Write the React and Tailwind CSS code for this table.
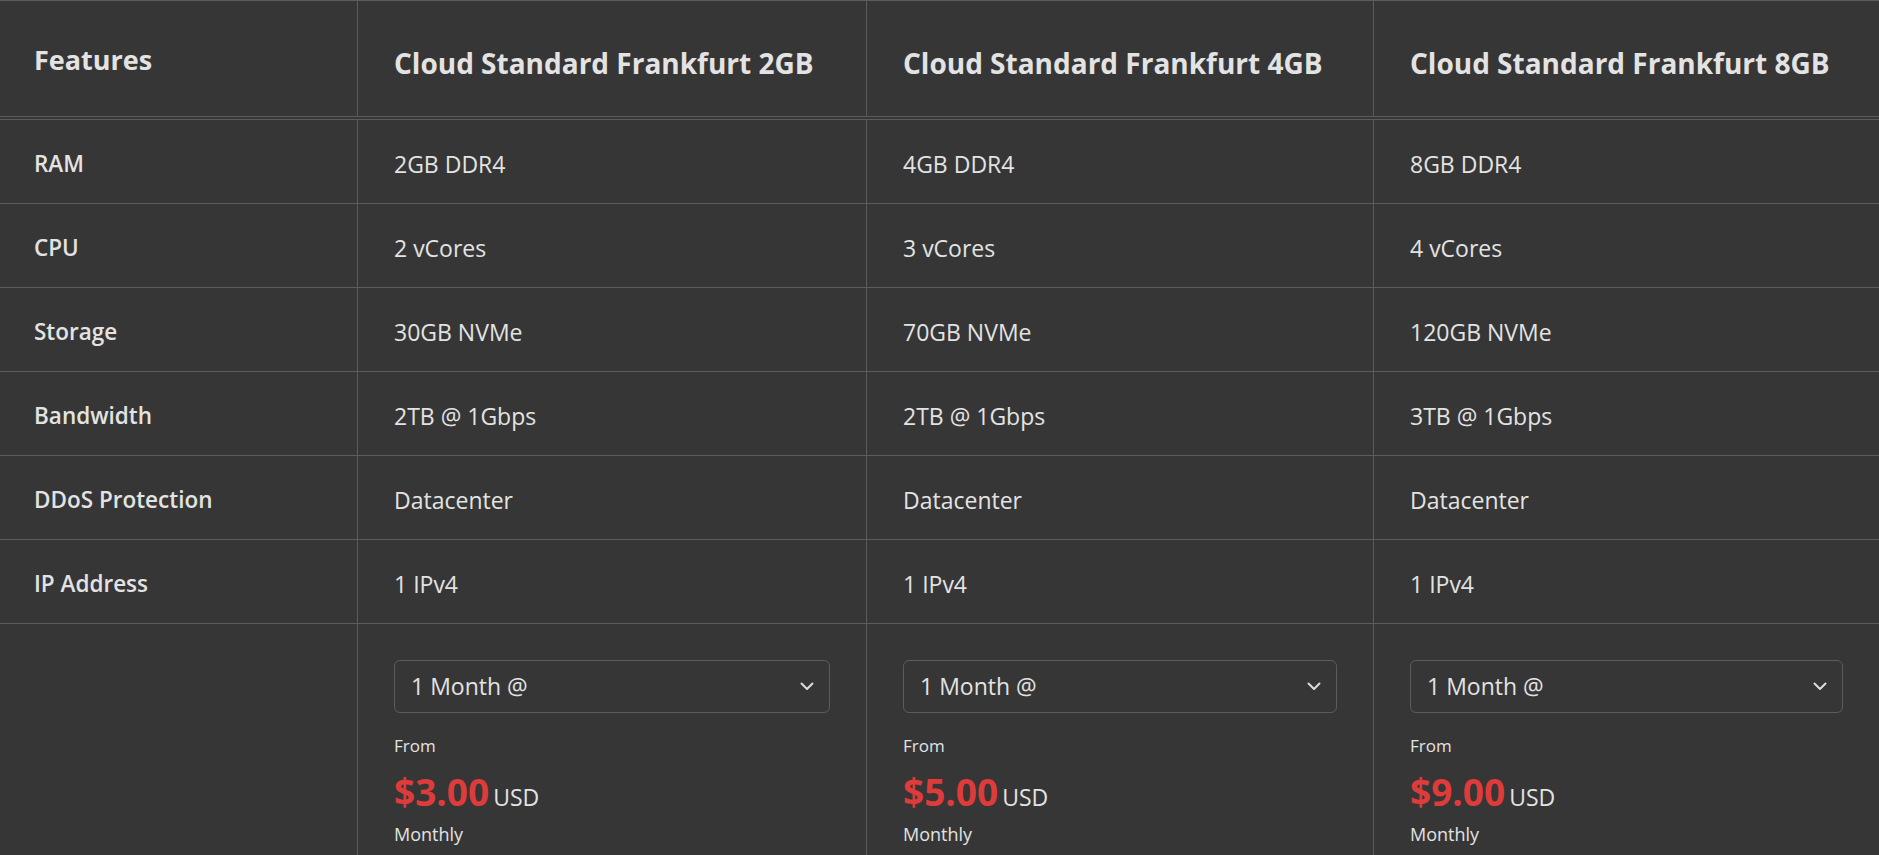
import React from "react";

const plans = [
  { name: "Cloud Standard Frankfurt 2GB", ram: "2GB DDR4", cpu: "2 vCores", storage: "30GB NVMe", bw: "2TB @ 1Gbps", price: "$3.00" },
  { name: "Cloud Standard Frankfurt 4GB", ram: "4GB DDR4", cpu: "3 vCores", storage: "70GB NVMe", bw: "2TB @ 1Gbps", price: "$5.00" },
  { name: "Cloud Standard Frankfurt 8GB", ram: "8GB DDR4", cpu: "4 vCores", storage: "120GB NVMe", bw: "3TB @ 1Gbps", price: "$9.00" },
];

const rows = [
  { label: "RAM", key: "ram" },
  { label: "CPU", key: "cpu" },
  { label: "Storage", key: "storage" },
  { label: "Bandwidth", key: "bw" },
  { label: "DDoS Protection", value: "Datacenter" },
  { label: "IP Address", value: "1 IPv4" },
];

const grid = "grid grid-cols-[357px_509px_507px_1fr]";

function Chevron() {
  return (
    <svg width="14" height="9" viewBox="0 0 14 9" className="shrink-0">
      <polyline points="1.5,1.5 7,7 12.5,1.5" fill="none" stroke="#dcdcdc" strokeWidth="2" strokeLinecap="round" strokeLinejoin="round" />
    </svg>
  );
}

export default function App() {
  return (
    <div
      className="min-h-screen bg-[#363636] text-[#e3e3e3] border-t border-[#5c5c5c] overflow-hidden"
      style={{ fontFamily: '"Open Sans", "Noto Sans", sans-serif' }}
    >
      <div className={`${grid} h-[116px] border-b border-[#5c5c5c]`}>
        <div className="flex items-center pl-[34px] text-[27px] font-bold pt-[4px]">Features</div>
        {plans.map((p) => (
          <div key={p.name} className="flex items-center pl-[36px] border-l border-[#5c5c5c] text-[28px] font-bold pt-[9px] whitespace-nowrap">
            {p.name}
          </div>
        ))}
      </div>
      <div className="mt-[2px] border-t border-[#5c5c5c]">
        {rows.map((r) => (
          <div key={r.label} className={`${grid} h-[84px] border-b border-[#5c5c5c]`}>
            <div className="flex items-center pl-[34px] pt-[4px] text-[22.5px] font-semibold">{r.label}</div>
            {plans.map((p) => (
              <div key={p.name} className="flex items-center pl-[36px] pt-[6px] border-l border-[#5c5c5c] text-[23px]">
                {r.value ? r.value : p[r.key]}
              </div>
            ))}
          </div>
        ))}
        <div className={`${grid} h-[240px]`}>
          <div></div>
          {plans.map((p) => (
            <div key={p.name} className="border-l border-[#5c5c5c] px-[36px] pt-[36px]">
              <div className="flex items-center justify-between h-[53px] border border-[#5c5c5c] rounded-[6px] pl-[16px] pr-[15px] text-[23px]">
                <span>1 Month @</span>
                <Chevron />
              </div>
              <div className="mt-[21px] text-[17px] leading-[24px]">From</div>
              <div className="flex items-baseline mt-[10px] leading-[48px]">
                <span className="text-[37px] font-bold text-[#de3b3b]">{p.price}</span>
                <span className="text-[23px] ml-[4px]">USD</span>
              </div>
              <div className="text-[18px] leading-[26px]">Monthly</div>
            </div>
          ))}
        </div>
      </div>
    </div>
  );
}
